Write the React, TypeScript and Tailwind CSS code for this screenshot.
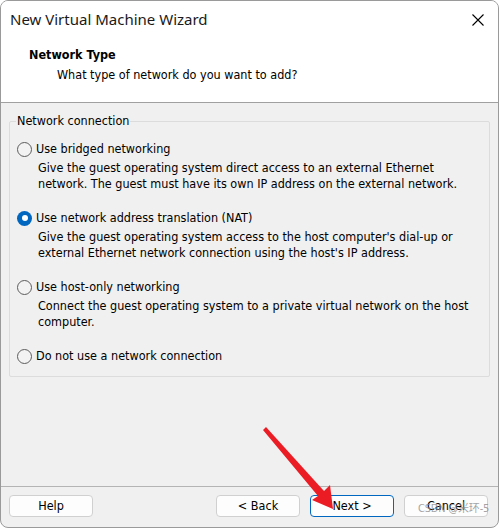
import React from 'react';

const body = "font-['DejaVu_Sans_Condensed','DejaVu_Sans',sans-serif] text-[12.5px] text-black";

interface Option {
    label: string;
    lines: string[];
    checked?: boolean;
}

const options: Option[] = [
    {
        label: 'Use bridged networking',
        lines: [
            'Give the guest operating system direct access to an external Ethernet',
            'network. The guest must have its own IP address on the external network.',
        ],
    },
    {
        label: 'Use network address translation (NAT)',
        lines: [
            "Give the guest operating system access to the host computer's dial-up or",
            "external Ethernet network connection using the host's IP address.",
        ],
        checked: true,
    },
    {
        label: 'Use host-only networking',
        lines: ['Connect the guest operating system to a private virtual network on the host', 'computer.'],
    },
    { label: 'Do not use a network connection', lines: [] },
];

function Radio({ checked }: { checked?: boolean }) {
    return checked ? (
        <span className="w-[15px] h-[15px] rounded-full bg-[#0067c0] flex items-center justify-center shrink-0">
            <span className="w-[6px] h-[6px] rounded-full bg-white" />
        </span>
    ) : (
        <span className="w-[15px] h-[15px] rounded-full border border-[#5c5c5c] bg-[#f3f3f3] shrink-0" />
    );
}

function WizButton({ label, primary }: { label: string; primary?: boolean }) {
    return (
        <button
            type="button"
            className={`w-[84px] h-[22px] rounded-[4px] bg-[#fdfdfd] border ${primary ? 'border-[#0067c0]' : 'border-[#d0d0d0]'} ${body} flex items-center justify-center`}
        >
            {label}
        </button>
    );
}

export default function App() {
    return (
        <div className="relative w-[499px] h-[528px] bg-[#f0f0f0] border border-[#9a9a9a] rounded-[8px] overflow-hidden flex flex-col">
            {/* ─── Header ─────────────────────────────────────────────── */}
            <div className="h-[102px] shrink-0 bg-white border-b border-[#a0a0a0] relative">
                <div className="flex items-center justify-between pl-[9px] pr-[14px] h-[37px]">
                    <span className="font-['Noto_Sans','Open_Sans',sans-serif] text-[15px] text-[#1a1a1a]">New Virtual Machine Wizard</span>
                    <svg width="12" height="12" viewBox="0 0 12 12" className="text-black">
                        <path d="M0.5 0.5 L11.5 11.5 M11.5 0.5 L0.5 11.5" stroke="currentColor" strokeWidth="1.1" />
                    </svg>
                </div>
                <div className={`${body} pl-[28px] pt-[9px] font-bold leading-[16px]`}>Network Type</div>
                <div className={`${body} pl-[56px] pt-[4px] leading-[16px]`}>What type of network do you want to add?</div>
            </div>

            {/* ─── Body ───────────────────────────────────────────────── */}
            <div className="flex-1 px-[8px] pt-[10px]">
                <fieldset className="border border-[#dcdcdc] rounded-[2px] h-[264px] pl-[7px] pr-[8px] m-0">
                    <legend className={`${body} px-[1px] -ml-[1px] leading-[16px]`}>Network connection</legend>
                    <div className="flex flex-col gap-[18px] pt-[12px]">
                        {options.map((o) => (
                            <div key={o.label} className="flex flex-col">
                                <div className="flex items-center gap-[4px] h-[16px]">
                                    <Radio checked={o.checked} />
                                    <span className={`${body} leading-[16px]`}>{o.label}</span>
                                </div>
                                {o.lines.length > 0 && (
                                    <div className={`${body} pl-[21px] pt-[3px] leading-[16px]`}>
                                        {o.lines.map((l) => (
                                            <div key={l} className="whitespace-nowrap">{l}</div>
                                        ))}
                                    </div>
                                )}
                            </div>
                        ))}
                    </div>
                </fieldset>
            </div>

            {/* ─── Footer ─────────────────────────────────────────────── */}
            <div className="h-[41px] shrink-0 border-t border-[#b4b4b4] flex items-start pt-[8px] pl-[8px] pr-[10px]">
                <WizButton label="Help" />
                <div className="flex-1" />
                <div className="flex gap-[10px]">
                    <WizButton label="< Back" />
                    <WizButton label="Next >" primary />
                    <WizButton label="Cancel" />
                </div>
            </div>

            {/* watermark */}
            <span className="absolute left-[417px] top-[501px] font-['DejaVu_Sans_Condensed','Noto_Sans_CJK_SC',sans-serif] text-[11px] leading-[14px] tracking-[-0.2px] text-[#8c8c8c]/80 whitespace-nowrap">
                CSDN @米环-5
            </span>

            {/* annotation arrow */}
            <svg className="absolute left-0 top-0 pointer-events-none" width="499" height="528" viewBox="-1 -1 499 528">
                <polygon
                    points="261,428 264,425 322,489 328,483 331,507 310,498 316,494"
                    fill="#ec1c24"
                />
            </svg>
        </div>
    );
}
